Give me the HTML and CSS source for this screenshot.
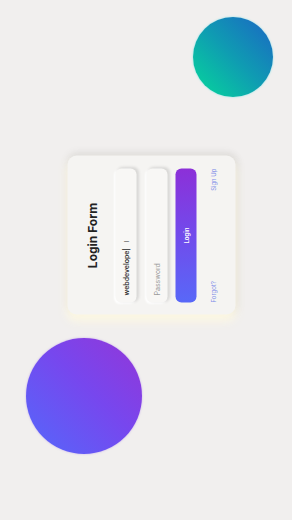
FILE: index.html
```html
<!DOCTYPE html>
<html lang="en">
<head>
  <meta charset="UTF-8">
  <title>Login Form</title>
  <link rel="stylesheet" href="styles.css">
</head>
<body>

  <div class="scene">
    <!-- background blobs -->
    <div class="blob blob-teal"></div>
    <div class="blob blob-purple"></div>

    <!-- card is drawn upright, then turned on its side -->
    <div class="card">
      <h2 class="title">Login Form</h2>
      <div class="field">webdevelope|<span class="ibeam">I</span></div>
      <div class="field placeholder">Password</div>
      <button class="login-btn">Login</button>
      <div class="links">
        <a href="#">Forgot?</a>
        <a href="#">Sign Up</a>
      </div>
    </div>
  </div>

</body>
</html>
```

FILE: styles.css
```css
body {
  margin: 0;
  background-color: #f1efee;
  font-family: "Inter", "Liberation Sans", sans-serif;
}

.scene {
  position: relative;
  height: 520px;
  box-sizing: border-box;
  padding: 0 0 51px 10px;
  display: flex;
  justify-content: center;
  align-items: center;
  overflow: hidden;
}

.blob {
  position: absolute;
  border-radius: 50%;
}

.blob-teal {
  left: 193px;
  top: 17px;
  width: 80px;
  height: 80px;
  background: linear-gradient(45deg, #05d99a, #0f9cb2 50%, #1b66c4);
  box-shadow: 0 0 2px rgba(40, 220, 230, 0.6);
}

.blob-purple {
  left: 26px;
  top: 338px;
  width: 116px;
  height: 116px;
  background: linear-gradient(45deg, #5468fb, #7747ee 55%, #9336d8);
  box-shadow: 0 0 2px rgba(150, 90, 240, 0.5);
}

.card {
  width: 159px;
  height: 168px;
  box-sizing: border-box;
  padding: 17px 13px 0 12px;
  background-color: #f5f4f2;
  border-radius: 9px;
  box-shadow: -6px 0 10px rgba(255, 250, 225, 0.9), 3px 0 8px rgba(0, 0, 0, 0.06), 0 3px 8px rgba(0, 0, 0, 0.05);
  transform: rotate(-90deg);
  z-index: 1;
}

.title {
  margin: 0 0 15px;
  font-size: 12px;
  line-height: 16px;
  font-weight: 700;
  color: #222;
  text-align: center;
}

.field {
  height: 21px;
  box-sizing: border-box;
  margin-bottom: 10px;
  padding-left: 7px;
  font-size: 7px;
  line-height: 21px;
  font-weight: 500;
  color: #1e1e1e;
  background-color: #f8f7f5;
  border-radius: 6px;
  box-shadow: 1px 2px 3px rgba(0, 0, 0, 0.12), -1px -1px 2px #fff;
}

.ibeam {
  margin-left: 6px;
  font-size: 6px;
  color: #666;
}

.placeholder {
  color: #9a9a9a;
  font-weight: 400;
}

.login-btn {
  display: block;
  width: 100%;
  height: 21px;
  margin: -2px 0 13px;
  padding: 0;
  border: none;
  border-radius: 6px;
  background: linear-gradient(to right, #5868f8, #7448ea 55%, #8c30d8);
  color: white;
  font-family: inherit;
  font-size: 6px;
  font-weight: 600;
  cursor: pointer;
}

.links {
  display: flex;
  justify-content: space-between;
  line-height: 8px;
}

.links a {
  font-size: 6px;
  color: #7d8ae8;
  text-decoration: none;
}
```
